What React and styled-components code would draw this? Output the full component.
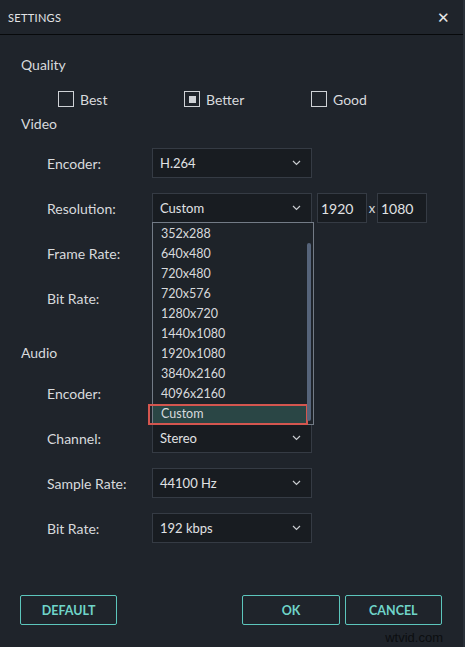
import React from "react";
import styled, { createGlobalStyle } from "styled-components";

const GlobalStyle = createGlobalStyle`
  html, body {
    margin: 0;
    padding: 0;
    background: #1f242b;
  }
  * {
    box-sizing: border-box;
  }
`;

const Window = styled.div`
  position: relative;
  width: 465px;
  height: 647px;
  background: #1f242b;
  border-right: 2px solid #2a3038;
  font-family: "Lato", "Open Sans", sans-serif;
  color: #d8dadd;
  overflow: hidden;
`;

const TitleBar = styled.div`
  height: 35px;
  display: flex;
  align-items: center;
  justify-content: space-between;
  padding: 0 13px 0 8px;
  border-bottom: 1px solid #07090b;
`;

const Title = styled.span`
  font-size: 11px;
  letter-spacing: 0.3px;
  color: #e2e4e6;
`;

const Close = styled.span`
  font-size: 15px;
  color: #e6e6e6;
  line-height: 1;
`;

const Body = styled.div`
  padding: 20px 21px 0 21px;
`;

const SectionTitle = styled.div`
  font-size: 14px;
  line-height: 20px;
  color: #d8dadd;
  margin-top: ${(p) => p.$top || 0}px;
`;

const QualityRow = styled.div`
  display: grid;
  grid-template-columns: 126px 127px 127px;
  padding-left: 37px;
  margin-top: 14px;
  height: 20px;
`;

const Option = styled.label`
  display: flex;
  align-items: center;
  gap: 6px;
  font-size: 14px;
  color: #d8dadd;
`;

const Box = styled.span`
  width: 16px;
  height: 16px;
  border: 1.5px solid #cfd2d6;
  display: flex;
  align-items: center;
  justify-content: center;

  &::after {
    content: "";
    width: 7px;
    height: 7px;
    background: ${(p) => (p.$checked ? "#cfd2d6" : "transparent")};
  }
`;

const Rows = styled.div`
  display: flex;
  flex-direction: column;
  gap: 15px;
  margin-top: ${(p) => p.$top || 0}px;
`;

const Row = styled.div`
  display: flex;
  align-items: center;
  height: 30px;
`;

const Label = styled.span`
  width: 131px;
  padding-left: 26px;
  font-size: 14px;
  color: #d8dadd;
`;

const SelectWrap = styled.div`
  position: relative;
  width: 160px;
  height: 30px;
`;

const Select = styled.div`
  height: 100%;
  display: flex;
  align-items: center;
  justify-content: space-between;
  padding: 0 10px 0 7px;
  background: #181c21;
  border: 1px solid #353b44;
  font-size: 13px;
  color: #e0e2e4;
`;

const Chevron = () => (
  <svg width="9" height="6" viewBox="0 0 9 6">
    <path d="M1 1l3.5 3.5L8 1" fill="none" stroke="#c9ccd0" strokeWidth="1.2" />
  </svg>
);

const SizeInput = styled.div`
  width: 50px;
  height: 30px;
  margin-left: ${(p) => p.$left || 0}px;
  display: flex;
  align-items: center;
  padding-left: 3px;
  background: #181c21;
  border: 1px solid #353b44;
  font-size: 14px;
  color: #e0e2e4;
`;

const Times = styled.span`
  width: 10px;
  text-align: center;
  font-size: 13px;
  color: #d8dadd;
`;

const List = styled.div`
  position: absolute;
  top: 29px;
  left: 0;
  width: 162px;
  height: 203px;
  padding-top: 1px;
  background: #1e2329;
  border: 1px solid #737b86;
  z-index: 5;
`;

const Item = styled.div`
  position: relative;
  height: 20px;
  line-height: 20px;
  padding-left: 8px;
  font-size: 12.5px;
  color: #d8dadd;
  width: 154px;
  background: ${(p) => (p.$active ? "#2a4645" : "transparent")};
`;

const Mark = styled.div`
  position: absolute;
  left: -5px;
  top: 0;
  width: 160px;
  height: 21px;
  border: 2px solid #d4564f;
`;

const ScrollThumb = styled.div`
  position: absolute;
  right: 2px;
  top: 20px;
  width: 4px;
  height: 178px;
  border-radius: 2px;
  background: #56647a;
`;

const Footer = styled.div`
  display: flex;
  align-items: center;
  padding: 0 21px 0 20px;
  margin-top: 52px;
`;

const Button = styled.button`
  width: 98px;
  height: 30px;
  margin-left: ${(p) => p.$left || 0}px;
  background: transparent;
  border: 1px solid #5cc6bc;
  border-radius: 2px;
  font-family: "Lato", "Open Sans", sans-serif;
  font-weight: 700;
  font-size: 12.5px;
  color: #6fd4c9;
  cursor: pointer;
`;

const Watermark = styled.span`
  position: absolute;
  right: 20px;
  bottom: 2px;
  font-family: "Liberation Sans", Arial, sans-serif;
  font-size: 13px;
  color: #0c0e10;
`;

const resolutions = [
  "352x288",
  "640x480",
  "720x480",
  "720x576",
  "1280x720",
  "1440x1080",
  "1920x1080",
  "3840x2160",
  "4096x2160",
  "Custom",
];

const SelectField = ({ value, children }) => (
  <SelectWrap>
    <Select>
      {value}
      <Chevron />
    </Select>
    {children}
  </SelectWrap>
);

const App = () => (
  <>
    <GlobalStyle />
    <Window>
      <TitleBar>
        <Title>SETTINGS</Title>
        <Close>✕</Close>
      </TitleBar>
      <Body>
        <SectionTitle>Quality</SectionTitle>
        <QualityRow>
          <Option>
            <Box />
            Best
          </Option>
          <Option>
            <Box $checked />
            Better
          </Option>
          <Option>
            <Box />
            Good
          </Option>
        </QualityRow>
        <SectionTitle $top={5}>Video</SectionTitle>
        <Rows $top={14}>
          <Row>
            <Label>Encoder:</Label>
            <SelectField value="H.264" />
          </Row>
          <Row>
            <Label>Resolution:</Label>
            <SelectField value="Custom">
              <List>
                {resolutions.map((r) => (
                  <Item key={r} $active={r === "Custom"}>
                    {r}
                    {r === "Custom" && <Mark />}
                  </Item>
                ))}
                <ScrollThumb />
              </List>
            </SelectField>
            <SizeInput $left={5}>1920</SizeInput>
            <Times>x</Times>
            <SizeInput>1080</SizeInput>
          </Row>
          {/* these two selects sit under the open resolution list */}
          <Row>
            <Label>Frame Rate:</Label>
            <SelectField />
          </Row>
          <Row>
            <Label>Bit Rate:</Label>
            <SelectField />
          </Row>
        </Rows>
        <SectionTitle $top={30}>Audio</SectionTitle>
        <Rows $top={15}>
          <Row>
            <Label>Encoder:</Label>
            <SelectField />
          </Row>
          <Row>
            <Label>Channel:</Label>
            <SelectField value="Stereo" />
          </Row>
          <Row>
            <Label>Sample Rate:</Label>
            <SelectField value="44100 Hz" />
          </Row>
          <Row>
            <Label>Bit Rate:</Label>
            <SelectField value="192 kbps" />
          </Row>
        </Rows>
      </Body>
      <Footer>
        <Button>DEFAULT</Button>
        <Button $left={125}>OK</Button>
        <Button $left={5}>CANCEL</Button>
      </Footer>
      <Watermark>wtvid.com</Watermark>
    </Window>
  </>
);

export default App;
